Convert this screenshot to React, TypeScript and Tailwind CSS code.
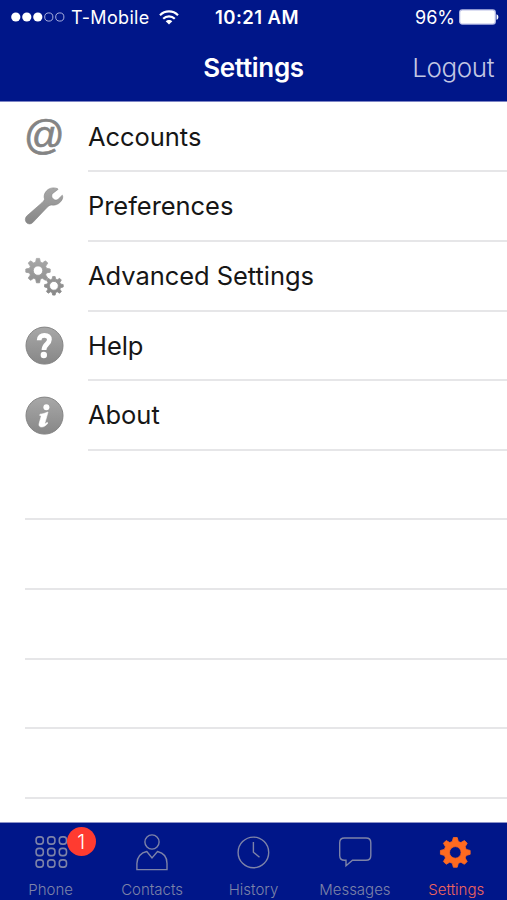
import type { ReactNode } from 'react';
import { clsx } from 'clsx';

interface GearProps {
  cx: number;
  cy: number;
  outer: number;
  root: number;
  hole: number;
  fill: string;
}

// Eight-toothed gear with a round hole in the middle
const Gear = ({ cx, cy, outer, root, hole, fill }: GearProps) => {
  const points: string[] = [];
  for (let i = 0; i < 8; i++) {
    [
      [root, -0.27],
      [outer, -0.13],
      [outer, 0.13],
      [root, 0.27],
    ].forEach(([r, offset]) => {
      const angle = (i * Math.PI) / 4 + offset;
      points.push(`${(cx + r * Math.sin(angle)).toFixed(2)} ${(cy - r * Math.cos(angle)).toFixed(2)}`);
    });
  }
  const ring = `M${cx - hole} ${cy}a${hole} ${hole} 0 1 0 ${hole * 2} 0a${hole} ${hole} 0 1 0 ${-hole * 2} 0Z`;
  return (
    <path
      d={`M${points.join('L')}Z${ring}`}
      fill={fill}
      fillRule="evenodd"
      stroke={fill}
      strokeWidth="0.8"
      strokeLinejoin="round"
    />
  );
};

const IconGradient = ({ id }: { id: string }) => (
  <linearGradient id={id} x1="0" y1="0" x2="0" y2="40" gradientUnits="userSpaceOnUse">
    <stop offset="0" stopColor="#a9a9a9" />
    <stop offset="1" stopColor="#858585" />
  </linearGradient>
);

const WrenchIcon = () => (
  <svg className="h-10 w-10" viewBox="0 1 40 40">
    <IconGradient id="wrench" />
    <path
      d="M33.3 2.6C29.6 1.2 25.3 1.9 22.6 4.8C20.1 7.5 19.6 10.6 20.6 13.2C20.2 14.4 19.3 15.5 18 16.7L2.7 30.1C1 32 .9 34.8 2.4 36.5C4 38.4 6.8 38.4 8.6 36.7L22.8 21.7C24.2 20.2 25.4 19.4 27 19C30.6 19.6 34.2 18.6 36.6 15.8C38.6 13.4 39.3 11.2 38.3 9.2L34.2 13.2C32.6 14.6 30.4 14.2 29 12.8C27.4 11.2 27.2 8.9 28.7 7.4L33.8 3.6C34.1 3.2 34 2.8 33.3 2.6Z"
      fill="url(#wrench)"
      stroke="#858585"
      strokeWidth="0.6"
    />
  </svg>
);

const GearsIcon = () => (
  <svg className="h-10 w-10" viewBox="0 0 40 40">
    <IconGradient id="gears" />
    <Gear cx={14} cy={13.6} outer={12.3} root={8.8} hole={4.7} fill="url(#gears)" />
    <Gear cx={29.9} cy={28.8} outer={9.4} root={6.9} hole={4.4} fill="url(#gears)" />
  </svg>
);

const RoundIcon = ({ children, id }: { children: ReactNode; id: string }) => (
  <svg className="h-10 w-10" viewBox="0 0 40 40">
    <IconGradient id={id} />
    <circle cx="20.5" cy="19.6" r="18.5" fill={`url(#${id})`} stroke="#858585" strokeWidth="1" />
    {children}
  </svg>
);

const HelpIcon = () => (
  <RoundIcon id="help">
    <path
      d="M15.2 14.2C15.2 11 17.4 9.4 20.4 9.4C23.8 9.4 25.4 11.2 25.4 13.6C25.4 18 20 18.2 20 24"
      fill="none"
      stroke="#fff"
      strokeWidth="4.8"
    />
    <circle cx="19.8" cy="29" r="3.2" fill="#fff" />
  </RoundIcon>
);

const InfoIcon = () => (
  <RoundIcon id="info">
    <circle cx="22.4" cy="11.2" r="3" fill="#fff" />
    <path
      d="M16 18.2C18.6 18 21 17.2 24 16L20.9 27.1C20.7 28.2 21.8 27.7 23.1 26.3L23.9 27C22 29.9 19.6 31 17.6 31C15.4 31 14.6 29.5 15.1 27.6L17 20.9C17.3 19.8 16.9 19.4 15.7 19.4Z"
      fill="#fff"
      stroke="#fff"
      strokeWidth="0.6"
    />
  </RoundIcon>
);

const AtIcon = () => (
  <span className="-mt-[5px] font-['Liberation_Sans',sans-serif] text-[40px] leading-10 text-[#848484] [-webkit-text-stroke:0.7px_#848484]">
    @
  </span>
);

const menuItems = [
  { label: 'Accounts', icon: <AtIcon /> },
  { label: 'Preferences', icon: <WrenchIcon /> },
  { label: 'Advanced Settings', icon: <GearsIcon /> },
  { label: 'Help', icon: <HelpIcon /> },
  { label: 'About', icon: <InfoIcon /> },
];

const KeypadIcon = () => (
  <svg className="h-10 w-10" viewBox="0 0 40 40" fill="none" stroke="currentColor" strokeWidth="1.6">
    {[8.5, 20, 31.5].map((y) =>
      [8.7, 20.3, 31.9].map((x) => (
        <rect key={`${x}-${y}`} x={x - 3.6} y={y - 3.6} width="7.2" height="7.2" rx="2.8" />
      )),
    )}
  </svg>
);

const ContactIcon = () => (
  <svg className="h-10 w-10" viewBox="0 0 40 40" fill="none" stroke="currentColor" strokeWidth="1.4">
    <circle cx="20" cy="10" r="7.1" />
    <path d="M14.8 19.5L20 26L25.5 19.5C31.3 20.8 35 25.2 35 31.5V37.6H4.9V31.5C4.9 25.2 9 20.6 14.8 19.5Z" />
  </svg>
);

const ClockIcon = () => (
  <svg className="h-10 w-10" viewBox="0 0 40 40" fill="none" stroke="currentColor" strokeWidth="1.4">
    <circle cx="20.4" cy="20.4" r="15.3" />
    <path d="M20.4 10V20.2L26.5 25.2" />
  </svg>
);

const MessageIcon = () => (
  <svg className="h-10 w-10" viewBox="0 0 40 40" fill="none" stroke="currentColor" strokeWidth="1.4">
    <path d="M9.5 6H31C34 6 35.8 7.8 35.8 10.7V23.5C35.8 26.5 34 28.3 31 28.3H17.5L11 33.7V28.3H9.5C6.5 28.3 4.7 26.5 4.7 23.5V10.7C4.7 7.8 6.5 6 9.5 6Z" />
  </svg>
);

const SettingsIcon = () => (
  <svg className="h-10 w-10" viewBox="0 0 40 40">
    <Gear cx={19.3} cy={20.4} outer={15} root={11.3} hole={5.8} fill="#ff6a1f" />
  </svg>
);

const tabs = [
  { label: 'Phone', icon: <KeypadIcon />, badge: 1 },
  { label: 'Contacts', icon: <ContactIcon /> },
  { label: 'History', icon: <ClockIcon /> },
  { label: 'Messages', icon: <MessageIcon /> },
  { label: 'Settings', icon: <SettingsIcon />, active: true },
];

const StatusBar = () => (
  <div className="grid h-[34px] grid-cols-[1fr_auto_1fr] items-center pr-[8px] pl-[11px] text-[18px] leading-none">
    <div className="flex items-center">
      <svg className="h-[10px] w-[54px]" viewBox="0 0 54 10">
        {[0, 1, 2, 3, 4].map((i) => (
          <circle
            key={i}
            cx={4.8 + i * 11}
            cy="5"
            r={i < 3 ? 4.6 : 4.1}
            fill={i < 3 ? '#fff' : 'none'}
            stroke={i < 3 ? 'none' : '#b9bee6'}
            strokeWidth="0.9"
          />
        ))}
      </svg>
      <span className="ml-[6px] pt-px tracking-[0.35px]">T-Mobile</span>
      <svg className="ml-[9px] h-[15px] w-5" viewBox="0 0 20 15" fill="none" stroke="#fff" strokeWidth="2.2">
        <path d="M1 5.2C6 .2 14 .2 19 5.2M4.2 8.7C7.4 5.5 12.6 5.5 15.8 8.7" />
        <path d="M6.7 11.3C8.6 9.4 11.4 9.4 13.3 11.3L10 14.6Z" fill="#fff" stroke="none" />
      </svg>
    </div>
    <span className="pt-px pl-[4px] text-[18.5px] font-semibold tracking-[0.45px]">10:21 AM</span>
    <div className="flex items-center justify-end">
      <span className="pt-px">96%</span>
      <svg className="ml-1 h-4 w-10" viewBox="0 0 40 16">
        <rect x="0.7" y="0.9" width="35.6" height="14.2" rx="2.6" fill="#fff" stroke="#b9bee6" strokeWidth="1.2" />
        <path d="M37.5 5.2C40 5.8 40 10.2 37.5 10.8Z" fill="#fff" />
      </svg>
    </div>
  </div>
);

export default function App() {
  return (
    <div className="flex h-[900px] w-[507px] flex-col overflow-hidden bg-white font-['Inter',sans-serif]">
      <header className="h-[102px] shrink-0 border-b border-[#7d84c4] bg-[#001689] text-white">
        <StatusBar />
        <div className="grid h-[66px] grid-cols-[1fr_auto_1fr] items-center px-[13px]">
          <h1 className="col-start-2 text-[26px] font-semibold tracking-[-0.3px]">Settings</h1>
          <button className="justify-self-end text-[26px] font-light tracking-[-0.4px] text-[#c3c7e3]">
            Logout
          </button>
        </div>
      </header>

      <main className="min-h-0 flex-1 overflow-hidden pt-[0.6px]">
        {menuItems.map(({ label, icon }) => (
          <div key={label} className="flex h-[69.65px] pl-6">
            <div className="flex w-16 items-center">{icon}</div>
            <div className="flex flex-1 items-center border-b-2 border-[#e6e6e8] pt-px text-[25.5px] tracking-[-0.05px] text-[#161616]">
              {label}
            </div>
          </div>
        ))}
        {[0, 1, 2, 3, 4].map((row) => (
          <div key={row} className="ml-[25px] h-[69.65px] border-b-2 border-[#e6e6e8]" />
        ))}
      </main>

      <nav className="grid h-[78px] shrink-0 grid-cols-5 border-t border-[#8c92c8] bg-[#001689]">
        {tabs.map(({ label, icon, badge, active }) => (
          <div
            key={label}
            className={clsx('flex flex-col items-center pt-[9px]', active ? 'text-[#f0645c]' : 'text-[#7d83a8]')}
          >
            <div className="relative">
              {icon}
              {badge && (
                <span className="absolute -top-[5px] left-[36px] flex h-[29px] w-[29px] items-center justify-center rounded-full bg-[#ff3b30] text-[20px] font-light text-white">
                  {badge}
                </span>
              )}
            </div>
            <span className="mt-[8px] text-[15px] leading-5 font-light">{label}</span>
          </div>
        ))}
      </nav>
    </div>
  );
}
